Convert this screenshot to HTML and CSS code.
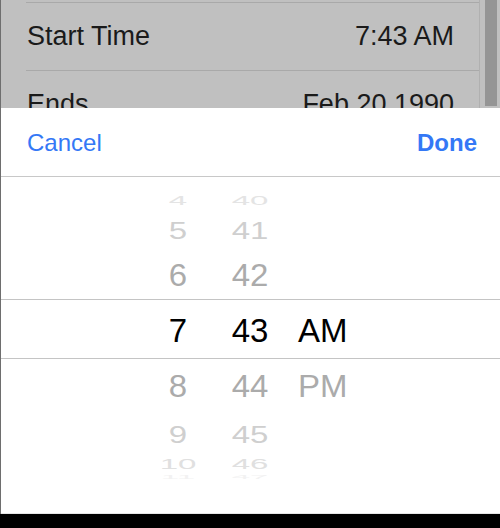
FILE: index.html
```html
<!DOCTYPE html>
<html>
<head>
<meta charset="utf-8">
<link rel="stylesheet" href="styles.css">
</head>
<body>
<div class="screen">
  <div class="backdrop">
    <div class="list">
      <div class="row">
        <span>Start Time</span>
        <span>7:43 AM</span>
      </div>
      <div class="row">
        <span>Ends</span>
        <span>Feb 20 1990</span>
      </div>
    </div>
    <div class="scroll">
      <div class="thumb"></div>
    </div>
  </div>
  <div class="sheet">
    <div class="toolbar">
      <span class="btn">Cancel</span>
      <span class="btn btn-done">Done</span>
    </div>
    <div class="picker">
      <div class="prow r4"><span class="h">4</span><span class="m">40</span><span class="p"></span></div>
      <div class="prow r5"><span class="h">5</span><span class="m">41</span><span class="p"></span></div>
      <div class="prow r6"><span class="h">6</span><span class="m">42</span><span class="p"></span></div>
      <div class="prow sel"><span class="h">7</span><span class="m">43</span><span class="p">AM</span></div>
      <div class="prow r8"><span class="h">8</span><span class="m">44</span><span class="p">PM</span></div>
      <div class="prow r9"><span class="h">9</span><span class="m">45</span><span class="p"></span></div>
      <div class="prow r10"><span class="h">10</span><span class="m">46</span><span class="p"></span></div>
      <div class="prow r11"><span class="h">11</span><span class="m">47</span><span class="p"></span></div>
    </div>
  </div>
  <div class="homebar"></div>
</div>
</body>
</html>
```
FILE: styles.css
```css
html, body {
  margin: 0;
  padding: 0;
  background: #000;
}
body {
  width: 500px;
  height: 528px;
  overflow: hidden;
  font-family: "Liberation Sans", Arial, sans-serif;
}
.screen {
  width: 500px;
  height: 528px;
  display: flex;
  flex-direction: column;
}
.backdrop {
  height: 108px;
  flex: none;
  background: #c0c0c0;
  border-left: 1px solid #6e6e6e;
  box-sizing: border-box;
  display: flex;
  overflow: hidden;
}
.list {
  width: 453px;
  margin-left: 25px;
  padding-top: 2px;
  border-right: 1px solid #b0b0b0;
}
.row {
  height: 67px;
  border-top: 1px solid #a9a9a9;
  display: flex;
  justify-content: space-between;
  align-items: center;
  padding-left: 1px;
  padding-right: 25px;
  font-size: 27px;
  color: #1a1a1a;
}
.scroll {
  flex: 1;
  padding-left: 5px;
  padding-right: 3px;
}
.thumb {
  height: 106px;
  background: #959595;
}
.sheet {
  height: 406px;
  flex: none;
  background: #fff;
  border-left: 1px solid #6e6e6e;
  box-sizing: border-box;
  display: flex;
  flex-direction: column;
}
.toolbar {
  height: 69px;
  box-sizing: border-box;
  flex: none;
  border-bottom: 1px solid #c8c8c8;
  display: flex;
  justify-content: space-between;
  align-items: center;
  padding: 2px 23px 0 26px;
  font-size: 24px;
  color: #3478f6;
}
.btn-done {
  font-weight: bold;
}
.picker {
  flex: 1;
  padding-top: 16px;
  border-bottom: 1px solid #e6e6e6;
  overflow: hidden;
}
.prow {
  display: grid;
  grid-template-columns: 60px 60px 1fr;
  column-gap: 12px;
  padding-left: 147px;
  font-size: 33px;
  text-align: center;
  transform-origin: center;
}
.prow .p {
  text-align: left;
  padding-left: 6px;
}
.r4 { height: 16px; line-height: 16px; color: #e4e4e4; transform: scaleY(0.38); }
.r5 { height: 44px; line-height: 44px; color: #cfcfcf; transform: scaleY(0.72); }
.r6 { height: 46px; line-height: 46px; color: #ababab; transform: scaleY(0.93); }
.sel {
  height: 54px;
  line-height: 54px;
  padding-top: 4px;
  border-top: 1px solid #c4c4c4;
  border-bottom: 1px solid #c4c4c4;
  color: #000;
}
.r8 { height: 56px; line-height: 56px; color: #ababab; transform: scaleY(0.93); }
.r9 { height: 39px; line-height: 39px; color: #cfcfcf; transform: scaleY(0.7); }
.r10 { height: 20px; line-height: 20px; color: #e0e0e0; transform: scaleY(0.47); }
.r11 { height: 6px; line-height: 6px; color: #f2f2f2; transform: scaleY(0.15); }
.homebar {
  flex: 1;
  background: #000;
}
```
